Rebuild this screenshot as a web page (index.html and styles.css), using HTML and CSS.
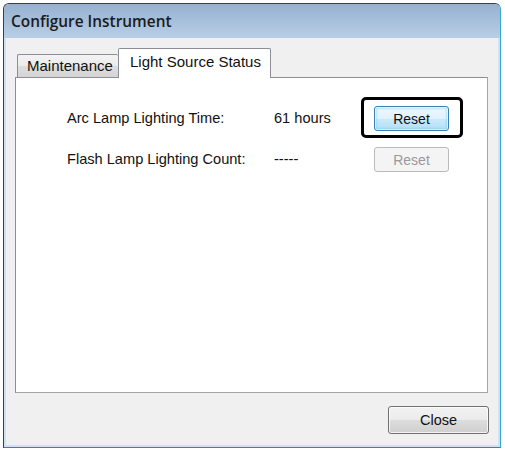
FILE: index.html
```html
<!DOCTYPE html>
<html>
<head>
<meta charset="utf-8">
<link rel="stylesheet" href="styles.css">
</head>
<body>
<div class="window">
  <div class="titlebar"><span class="title">Configure Instrument</span></div>
  <div class="client">
    <div class="tabs">
      <div class="tab">Maintenance</div>
      <div class="tab active">Light Source Status</div>
    </div>
    <div class="panel">
      <div class="grid">
        <div class="label">Arc Lamp Lighting Time:</div>
        <div class="value">61 hours</div>
        <div class="btn-wrap">
          <button class="btn default">Reset</button>
          <span class="focus-ring"></span>
        </div>
        <div class="label">Flash Lamp Lighting Count:</div>
        <div class="value">-----</div>
        <div class="btn-wrap">
          <button class="btn disabled" disabled>Reset</button>
        </div>
      </div>
    </div>
    <div class="footer">
      <button class="btn close">Close</button>
    </div>
  </div>
</div>
</body>
</html>
```

FILE: styles.css
```css
html, body {
  margin: 0;
  padding: 0;
  background: #ffffff;
}

body {
  font-family: "Liberation Sans", Arial, sans-serif;
  color: #111;
}

.window {
  box-sizing: border-box;
  margin: 3px 0 0 3px;
  width: 498px;
  height: 445px;
  border: 1px solid #3e3e3e;
  border-right-color: #35a9d6;
  border-bottom-color: #1f8db2;
  border-radius: 6px 6px 0 0;
  background: #d3e0ef;
  display: flex;
  flex-direction: column;
}

.titlebar {
  height: 34px;
  flex: none;
  display: flex;
  align-items: center;
  padding-left: 7px;
  border-radius: 5px 5px 0 0;
  background: linear-gradient(to bottom, #98b1cf 0%, #a6bfdb 50%, #b9cfe6 100%);
}

.title {
  font-family: "Open Sans", "Noto Sans", sans-serif;
  font-weight: 600;
  font-size: 15.4px;
  color: #1b1b1b;
  margin-top: 1px;
}

.client {
  flex: 1;
  margin: 0 2px 2px 2px;
  background: #f0f0f0;
  display: flex;
  flex-direction: column;
}

.tabs {
  display: flex;
  align-items: flex-end;
  margin-top: 10px;
  padding-left: 11px;
  height: 29px;
  position: relative;
  z-index: 1;
}

.tab {
  box-sizing: border-box;
  font-size: 15px;
  color: #111;
  border: 1px solid #8b8e96;
  border-bottom: none;
  border-radius: 2px 2px 0 0;
}

.tab:first-child {
  width: 101px;
  height: 23px;
  padding: 2px 0 0 9px;
  background: linear-gradient(to bottom, #f3f3f3 0%, #ebebeb 50%, #dedede 51%, #d4d4d4 100%);
  border-right: none;
}

.tab.active {
  width: 153px;
  height: 30px;
  margin-bottom: -1px;
  padding: 4px 0 0 11px;
  background: #ffffff;
}

.panel {
  box-sizing: border-box;
  margin: 0 10px 0 9px;
  height: 316px;
  background: #ffffff;
  border: 1px solid #8b8e96;
  border-right-color: #a5a5a5;
  border-bottom-color: #a5a5a5;
  padding: 28px 0 0 51px;
}

.grid {
  display: grid;
  grid-template-columns: 207px 100px 75px;
  grid-auto-rows: 25px;
  row-gap: 16px;
  align-items: center;
}

.label, .value {
  font-size: 14.6px;
  color: #111;
  margin-top: -1px;
}

.btn-wrap {
  position: relative;
  height: 25px;
}

.btn {
  box-sizing: border-box;
  font-family: "Liberation Sans", Arial, sans-serif;
  font-size: 14px;
  color: #111;
  border: 1px solid #707070;
  border-radius: 3px;
  padding: 0;
  background: linear-gradient(to bottom, #f2f2f2 0%, #ebebeb 50%, #dddddd 51%, #cfcfcf 100%);
  box-shadow: inset 0 0 0 1px rgba(255, 255, 255, 0.75);
}

.btn-wrap .btn {
  width: 75px;
  height: 25px;
}

.btn.default {
  border-color: #3c7fb1;
  background: linear-gradient(to bottom, #eef8fd 0%, #e0f2fc 50%, #c9eafc 51%, #b5dff6 100%);
  box-shadow: inset 0 0 0 1px rgba(255, 255, 255, 0.6), inset 0 0 2px 2px rgba(76, 185, 240, 0.3);
}

.btn.disabled {
  border-color: #b9bcbf;
  background: #f4f4f4;
  color: #9a9a9a;
  box-shadow: none;
}

.focus-ring {
  position: absolute;
  left: -13px;
  top: -9px;
  width: 102px;
  height: 41px;
  box-sizing: border-box;
  border: 3px solid #000;
  border-radius: 5px;
  pointer-events: none;
}

.footer {
  display: flex;
  justify-content: flex-end;
  padding: 13px 9px 0 0;
}

.btn.close {
  width: 101px;
  height: 28px;
  font-size: 14.5px;
  border-color: #707070;
}
```
